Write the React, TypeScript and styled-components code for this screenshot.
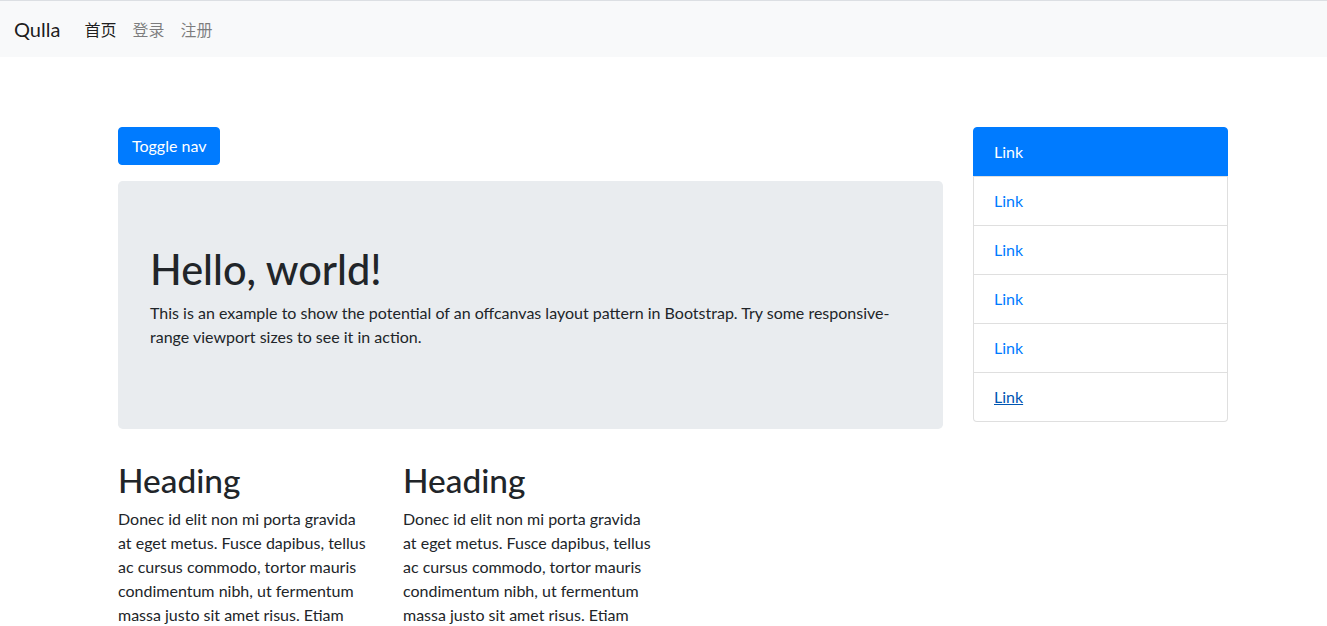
import React from "react";
import styled, { createGlobalStyle } from "styled-components";

const Global = createGlobalStyle`
  * { box-sizing: border-box; }
  html, body { margin: 0; padding: 0; }
  body {
    font-family: Lato, "Noto Sans CJK SC", sans-serif;
    font-size: 16px;
    line-height: 1.5;
    color: #212529;
    background: #fff;
  }
`;

const Navbar = styled.nav`
  display: flex;
  align-items: center;
  height: 57px;
  padding: 0 16px 0 14px;
  border-top: 1px solid #dcdfe3;
  background: #f8f9fa;
`;

const Brand = styled.a`
  font-size: 20px;
  line-height: 30px;
  color: rgba(0, 0, 0, 0.9);
  margin-right: 16px;
  text-decoration: none;
`;

const NavList = styled.div`
  display: flex;
`;

const NavLink = styled.a<{ $active?: boolean }>`
  font-family: "Noto Sans CJK SC", sans-serif;
  padding: 8px;
  font-size: 16px;
  line-height: 24px;
  color: ${(p) => (p.$active ? "rgba(0,0,0,0.9)" : "rgba(0,0,0,0.5)")};
  text-decoration: none;
`;

const Container = styled.div`
  width: 1140px;
  margin: 70px 0 0 103px;
  display: grid;
  grid-template-columns: 855px 285px;
`;

const MainCol = styled.div`
  padding: 0 15px;
`;

const SideCol = styled.div`
  padding: 0 15px;
`;

const ToggleButton = styled.button`
  display: block;
  font-family: inherit;
  font-size: 16px;
  line-height: 24px;
  padding: 6px 13px;
  color: #fff;
  background: #007bff;
  border: 1px solid #007bff;
  border-radius: 4px;
  margin: 0 0 16px;
  cursor: pointer;
`;

const Jumbotron = styled.div`
  background: #e9ecef;
  border-radius: 4.8px;
  padding: 64px 32px;
  margin-bottom: 32px;
`;

const Display = styled.h1`
  font-size: 41.5px;
  font-weight: 500;
  line-height: 48px;
  margin: 0 0 8px;
`;

const Para = styled.p`
  margin: 0 0 16px;
`;

const Row = styled.div`
  display: grid;
  grid-template-columns: repeat(3, 285px);
  margin: 0 -15px;
`;

const Col = styled.div`
  padding: 0 15px;
`;

const Heading = styled.h2`
  font-size: 33.4px;
  font-weight: 500;
  line-height: 38.4px;
  margin: 0 0 8px;
`;

const ListGroup = styled.div`
  display: flex;
  flex-direction: column;
`;

const ListItem = styled.a<{ $active?: boolean; $hover?: boolean }>`
  display: block;
  padding: 12px 20px;
  line-height: 24px;
  margin-bottom: -1px;
  border: 1px solid ${(p) => (p.$active ? "#007bff" : "rgba(0,0,0,0.125)")};
  background: ${(p) => (p.$active ? "#007bff" : "#fff")};
  color: ${(p) => (p.$active ? "#fff" : p.$hover ? "#0056b3" : "#007bff")};
  text-decoration: ${(p) => (p.$hover ? "underline" : "none")};
  &:first-child {
    border-top-left-radius: 4px;
    border-top-right-radius: 4px;
  }
  &:last-child {
    margin-bottom: 0;
    border-bottom-left-radius: 4px;
    border-bottom-right-radius: 4px;
  }
`;

const body =
  "Donec id elit non mi porta gravida at eget metus. Fusce dapibus, tellus ac cursus commodo, tortor mauris condimentum nibh, ut fermentum massa justo sit amet risus. Etiam porta sem malesuada magna mollis euismod. Donec sed odio dui.";

export default function App() {
  return (
    <>
      <Global />
      <Navbar>
        <Brand href="#">Qulla</Brand>
        <NavList>
          <NavLink $active href="#">首页</NavLink>
          <NavLink href="#">登录</NavLink>
          <NavLink href="#">注册</NavLink>
        </NavList>
      </Navbar>
      <Container>
        <MainCol>
          <ToggleButton type="button">Toggle nav</ToggleButton>
          <Jumbotron>
            <Display>Hello, world!</Display>
            <Para>
              This is an example to show the potential of an offcanvas layout
              pattern in Bootstrap. Try some responsive-range viewport sizes to
              see it in action.
            </Para>
          </Jumbotron>
          <Row>
            <Col>
              <Heading>Heading</Heading>
              <Para>{body}</Para>
            </Col>
            <Col>
              <Heading>Heading</Heading>
              <Para>{body}</Para>
            </Col>
          </Row>
        </MainCol>
        <SideCol>
          <ListGroup>
            <ListItem $active href="#">Link</ListItem>
            <ListItem href="#">Link</ListItem>
            <ListItem href="#">Link</ListItem>
            <ListItem href="#">Link</ListItem>
            <ListItem href="#">Link</ListItem>
            <ListItem $hover href="#">Link</ListItem>
          </ListGroup>
        </SideCol>
      </Container>
    </>
  );
}
